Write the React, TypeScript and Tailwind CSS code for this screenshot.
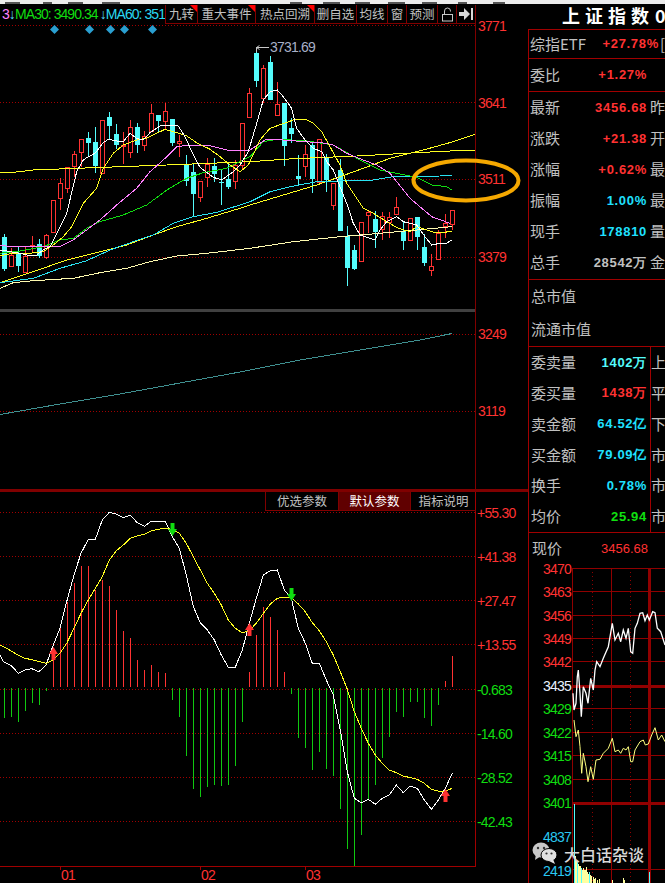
type P = number[];

const pts = (list: P[]) => list.map(([x, y]) => `${x.toFixed(1)},${y.toFixed(1)}`).join(" ");

// price chart lines are read off two crops, 3x scale, second one shifted by 250px
const price = (a: P[], b: P[]) => [
  ...a.map(([x, y]) => [x / 3, (y + 270) / 3]),
  ...b.map(([x, y]) => [(x + 750) / 3, (y + 270) / 3]),
];
const macd = (a: P[], b: P[]) => [
  ...a.map(([x, y]) => [x / 3, y / 3 + 480]),
  ...b.map(([x, y]) => [(x + 780) / 3, y / 3 + 480]),
];
const mini = (a: P[]) => a.map(([x, y]) => [x / 3 + 500, y / 3 + 560]);

const axisText = "font-['Liberation_Sans',sans-serif] text-[14px] tracking-[-0.8px]";

const candles: [number, number, number, number, "r" | "c"][] = [
  [702, 711, 807, 813, "c"], [745, 765, 797, 800, "r"], [740, 762, 797, 815, "c"], [740, 767, 815, 820, "r"],
  [708, 736, 738, 760, "r"], [718, 732, 767, 773, "c"], [703, 706, 772, 776, "r"], [599, 601, 695, 695, "r"],
  [535, 550, 595, 630, "r"], [502, 502, 565, 578, "r"], [453, 463, 497, 530, "r"], [418, 418, 457, 500, "r"],
  [396, 414, 429, 470, "c"], [380, 426, 497, 520, "c"], [361, 361, 520, 520, "r"], [337, 351, 378, 420, "c"],
  [373, 402, 434, 447, "c"], [396, 434, 436, 492, "r"], [360, 382, 455, 475, "r"], [368, 381, 435, 460, "c"],
  [392, 407, 436, 453, "r"], [312, 340, 392, 395, "r"], [345, 345, 363, 400, "c"], [310, 334, 364, 390, "r"],
  [357, 357, 429, 438, "c"], [405, 424, 430, 470, "r"], [465, 492, 542, 558, "c"], [492, 516, 581, 648, "c"],
  [544, 544, 592, 605, "r"], [475, 493, 532, 560, "r"], [475, 498, 522, 545, "c"], [510, 546, 548, 615, "c"],
  [488, 536, 560, 566, "c"], [480, 496, 544, 566, "r"], [370, 370, 495, 510, "r"], [265, 280, 352, 352, "r"],
  [140, 160, 242, 260, "c"], [195, 204, 295, 310, "r"], [168, 187, 300, 300, "c"], [245, 313, 344, 344, "r"],
  [308, 308, 437, 498, "c"], [355, 384, 402, 430, "c"], [465, 528, 537, 555, "c"], [435, 463, 498, 530, "r"],
  [430, 436, 537, 578, "c"], [416, 418, 545, 545, "r"], [462, 473, 540, 575, "c"], [549, 549, 616, 630, "r"],
  [478, 510, 693, 693, "c"], [678, 707, 803, 857, "c"], [735, 750, 807, 810, "c"], [667, 667, 782, 782, "r"],
  [632, 636, 646, 700, "r"], [632, 657, 697, 743, "c"], [635, 648, 687, 720, "r"], [635, 652, 665, 713, "r"],
  [592, 620, 641, 641, "r"], [665, 692, 722, 750, "c"], [655, 655, 720, 723, "r"], [651, 651, 710, 750, "c"],
  [702, 741, 788, 797, "c"], [762, 797, 809, 827, "r"], [690, 700, 776, 776, "r"], [642, 669, 677, 713, "r"],
  [631, 631, 671, 690, "r"],
];

const priceLines: { color: string; points: number[][] }[] = [
  {
    color: "#fffbb0",
    points: price(
      [[0, 595], [40, 578], [100, 572], [220, 565], [300, 548], [380, 535], [450, 515], [530, 498], [620, 490], [750, 475]],
      [[130, 455], [270, 440], [390, 430], [500, 420], [605, 410]]
    ),
  },
  {
    color: "#ffff20",
    points: price(
      [[0, 247], [40, 247], [100, 240], [230, 235], [360, 230], [500, 225], [750, 215]],
      [[100, 208], [200, 203], [320, 198], [500, 188], [600, 183], [675, 181]]
    ),
  },
  {
    color: "#ffff20",
    points: price(
      [[0, 578], [100, 545], [200, 510], [300, 485], [380, 465], [460, 435], [530, 410], [620, 385], [720, 355], [750, 345]],
      [[100, 315], [200, 285], [270, 260], [340, 235], [420, 205], [520, 180], [610, 155], [675, 133]]
    ),
  },
  {
    color: "#29e2f2",
    points: price(
      [[0, 578], [100, 565], [180, 535], [260, 512], [330, 480], [400, 455], [460, 435], [520, 400], [580, 380], [650, 367], [720, 345], [750, 335]],
      [[60, 305], [120, 290], [200, 275], [290, 272], [370, 270], [430, 260], [500, 260], [570, 258], [605, 256]]
    ),
  },
  {
    color: "#10dc10",
    points: price(
      [[0, 490], [60, 483], [130, 470], [180, 450], [220, 445], [260, 415], [300, 395], [370, 375], [440, 345], [500, 300], [560, 265], [610, 248], [680, 235], [750, 200]],
      [[40, 155], [80, 148], [165, 152], [250, 165], [330, 210], [390, 240], [450, 252], [500, 262], [545, 285], [590, 290], [605, 300]]
    ),
  },
  {
    color: "#ff80ff",
    points: price(
      [[0, 467], [60, 470], [130, 470], [180, 470], [220, 450], [260, 420], [300, 390], [350, 345], [410, 295], [450, 245], [490, 210], [530, 170], [570, 165], [630, 167], [680, 180], [750, 180]],
      [[50, 147], [100, 150], [165, 155], [215, 158], [250, 165], [290, 190], [340, 210], [380, 225], [420, 250], [480, 325], [545, 380], [600, 400]]
    ),
  },
  {
    color: "#ffff20",
    points: price(
      [[0, 497], [40, 490], [90, 490], [130, 485], [160, 465], [190, 440], [215, 410], [250, 340], [290, 295], [310, 235], [340, 190], [370, 165], [410, 150], [440, 145], [470, 130], [495, 118], [530, 128], [560, 138], [590, 158], [630, 178], [660, 200], [690, 225], [720, 245], [745, 225]],
      [[30, 150], [60, 115], [130, 90], [165, 87], [190, 100], [215, 125], [240, 170], [270, 225], [290, 280], [320, 325], [340, 355], [370, 370], [410, 395], [445, 415], [480, 425], [500, 410], [530, 420], [555, 428], [605, 425]]
    ),
  },
  {
    color: "#ffffff",
    points: price(
      [[0, 480], [20, 483], [40, 487], [60, 490], [90, 497], [110, 495], [130, 480], [150, 470], [180, 410], [200, 370], [230, 245], [250, 210], [265, 200], [285, 190], [310, 158], [325, 148], [350, 153], [370, 155], [390, 130], [410, 145], [430, 150], [450, 128], [480, 108], [500, 105], [535, 108], [555, 140], [580, 195], [600, 232], [640, 262], [665, 270], [700, 245], [720, 225], [745, 185]],
      [[20, 100], [40, 30], [60, 5], [82, 0], [100, 20], [125, 55], [140, 115], [165, 150], [190, 175], [215, 185], [230, 215], [250, 240], [270, 290], [290, 340], [310, 400], [330, 435], [375, 450], [390, 420], [410, 395], [440, 380], [460, 395], [500, 405], [525, 440], [545, 465], [570, 460], [590, 460], [605, 450]]
    ),
  },
];

const macdBars = [
  714, 711, 726, 693, 669, 675, 633, 525, 445, 365, 310, 258, 258, 330, 300, 318, 390, 453, 474, 540, 570, 555, 576, 579,
  660, 711, 828, 927, 951, 921, 915, 918, 915, 858, 726, 576, 465, 381, 411, 450, 576,
  642, 774, 804, 870, 816, 867, 888, 987, 1107, 1158, 1065, 960, 915, 834, 771, 696, 711, 666, 666, 714, 738, 675, 603, 528,
];

const difLine = macd(
  [[0, 525], [10, 545], [35, 558], [55, 580], [75, 570], [95, 566], [117, 575], [138, 555], [160, 495], [180, 445], [200, 365], [222, 285], [243, 220], [265, 178], [286, 178], [307, 120], [328, 97], [349, 102], [370, 113], [391, 106], [412, 128], [433, 139], [454, 124], [475, 126], [496, 124], [517, 170], [538, 205], [559, 285], [580, 380], [601, 428], [622, 450], [643, 480], [664, 525], [685, 562], [706, 562], [727, 510], [748, 430], [769, 355], [780, 318]],
  [[10, 285], [31, 272], [52, 270], [73, 330], [94, 355], [115, 445], [136, 490], [157, 550], [178, 550], [199, 600], [220, 645], [241, 750], [262, 875], [283, 955], [304, 968], [325, 958], [346, 973], [367, 955], [388, 945], [409, 915], [430, 938], [451, 918], [472, 925], [493, 960], [514, 988], [535, 960], [556, 925], [577, 880]]
);
const deaLine = macd(
  [[0, 495], [20, 505], [50, 523], [75, 535], [100, 540], [138, 550], [160, 540], [180, 520], [200, 490], [222, 445], [243, 400], [265, 360], [286, 325], [307, 290], [328, 240], [349, 212], [370, 195], [391, 175], [412, 168], [433, 163], [454, 153], [475, 148], [496, 145], [517, 148], [538, 160], [559, 190], [580, 230], [601, 270], [622, 310], [643, 340], [664, 375], [685, 420], [706, 445], [727, 458], [748, 452], [769, 430], [780, 415]],
  [[10, 400], [31, 372], [52, 355], [73, 352], [94, 352], [115, 372], [136, 395], [157, 428], [178, 452], [199, 485], [220, 525], [241, 575], [262, 628], [283, 695], [304, 745], [325, 790], [346, 825], [367, 850], [388, 870], [409, 878], [430, 888], [451, 893], [472, 898], [493, 910], [514, 928], [535, 933], [556, 933], [577, 925]]
);

const macdAxis = [
  { y: 512.5, label: "+55.30", up: true },
  { y: 556.5, label: "+41.38", up: true },
  { y: 600.5, label: "+27.47", up: true },
  { y: 644.5, label: "+13.55", up: true },
  { y: 689.5, label: "-0.683", up: false },
  { y: 733.5, label: "-14.60", up: false },
  { y: 777.5, label: "-28.52", up: false },
  { y: 821.5, label: "-42.43", up: false },
];

const miniWhite = mini([[219, 400], [222, 450], [228, 430], [232, 350], [235, 330], [240, 400], [244, 470], [250, 380], [258, 400], [264, 430], [272, 355], [280, 390], [285, 330], [290, 305], [300, 320], [310, 295], [325, 260], [337, 190], [345, 240], [355, 220], [362, 245], [370, 210], [378, 235], [385, 205], [392, 275], [398, 280], [405, 205], [412, 190], [420, 160], [428, 158], [435, 182], [442, 165], [448, 180], [458, 155], [465, 158], [472, 205], [482, 215], [495, 255]]);
const miniYellow = mini([[222, 480], [228, 530], [235, 510], [240, 560], [245, 640], [250, 580], [258, 620], [264, 665], [272, 620], [280, 658], [288, 600], [300, 598], [310, 580], [325, 565], [337, 535], [345, 575], [355, 570], [362, 580], [370, 565], [378, 570], [385, 560], [392, 605], [398, 605], [405, 570], [420, 545], [430, 540], [436, 555], [445, 552], [455, 525], [465, 503], [475, 540], [485, 525], [495, 545]]);

const miniAxis = [
  { y: 569, label: "3470", cls: "fill-[#ff3232]" },
  { y: 592, label: "3463", cls: "fill-[#ff3232]" },
  { y: 616, label: "3456", cls: "fill-[#ff3232]" },
  { y: 639, label: "3449", cls: "fill-[#ff3232]" },
  { y: 662, label: "3442", cls: "fill-[#ff3232]" },
  { y: 686, label: "3435", cls: "fill-[#e8f0ff]" },
  { y: 709, label: "3429", cls: "fill-[#10dc10]" },
  { y: 733, label: "3422", cls: "fill-[#10dc10]" },
  { y: 756, label: "3415", cls: "fill-[#10dc10]" },
  { y: 780, label: "3408", cls: "fill-[#10dc10]" },
  { y: 803, label: "3401", cls: "fill-[#10dc10]" },
  { y: 837, label: "4837", cls: "fill-[#29c8f2]" },
  { y: 871, label: "2419", cls: "fill-[#29c8f2]" },
];

// volume bars at the foot of the intraday chart
const miniVolume = [
  { x: 574, top: 804, color: "#54fcfc" }, { x: 575, top: 856, color: "#ffffa0" }, { x: 576, top: 860, color: "#ffffa0" },
  { x: 577, top: 862, color: "#54fcfc" }, { x: 578, top: 864, color: "#ffffa0" }, { x: 579, top: 866, color: "#ffffa0" },
  { x: 580, top: 866, color: "#ffffa0" }, { x: 581, top: 868, color: "#54fcfc" }, { x: 582, top: 870, color: "#ffffa0" },
  { x: 583, top: 868, color: "#ffffa0" }, { x: 584, top: 870, color: "#ffffa0" }, { x: 585, top: 870, color: "#ffffa0" },
  { x: 586, top: 867, color: "#ffffa0" }, { x: 587, top: 872, color: "#ffffa0" }, { x: 588, top: 874, color: "#ffffa0" },
  { x: 589, top: 872, color: "#54fcfc" }, { x: 590, top: 875, color: "#ffffa0" }, { x: 591, top: 876, color: "#ffffa0" },
  { x: 593, top: 877, color: "#ffffa0" }, { x: 594, top: 879, color: "#ffffa0" }, { x: 595, top: 878, color: "#ffffa0" },
  { x: 597, top: 880, color: "#ffffa0" }, { x: 599, top: 879, color: "#ffffa0" }, { x: 612, top: 880, color: "#ffffa0" },
  { x: 623, top: 878, color: "#ffffa0" }, { x: 624, top: 880, color: "#ffffa0" }, { x: 649, top: 872, color: "#54fcfc" },
];

const stripMarks = [
  [5, 13], [15, 5], [43, 9], [68, 15], [102, 18], [290, 12], [323, 17], [355, 15], [388, 17], [422, 15], [458, 9], [493, 12],
];

const Arrow = ({ x, y, up }: { x: number; y: number; up: boolean }) => (
  <polygon
    points={
      up
        ? `${x},${y} ${x + 4.5},${y + 7} ${x + 2},${y + 7} ${x + 2},${y + 13} ${x - 2},${y + 13} ${x - 2},${y + 7} ${x - 4.5},${y + 7}`
        : `${x},${y + 13} ${x + 4.5},${y + 6} ${x + 2},${y + 6} ${x + 2},${y} ${x - 2},${y} ${x - 2},${y + 6} ${x - 4.5},${y + 6}`
    }
    fill={up ? "#ff3232" : "#10dc10"}
  />
);

const Dotted = ({ y, x2 = 475 }: { y: number; x2?: number }) => (
  <line x1={0} x2={x2} y1={y} y2={y} stroke="#a00000" strokeDasharray="1 2" shapeRendering="crispEdges" />
);

function PriceChart() {
  return (
    <svg viewBox="0 5 528 304" className="block h-[304px] w-[528px]">
      <Dotted y={25.5} />
      <Dotted y={102.5} />
      <Dotted y={179.5} />
      <Dotted y={257.5} />
      <line x1={475.5} x2={475.5} y1={5} y2={309} stroke="#800000" />
      {[54.5, 89.5, 110.5, 124.5, 152.5].map((x) => (
        <polygon key={x} points={`${x},25 ${x + 4.5},29.5 ${x},34 ${x - 4.5},29.5`} fill="#2a9fd0" />
      ))}
      {candles.map(([wTop, bTop, bBot, wBot, kind], i) => {
        const left = 2 + 7 * i;
        const color = kind === "r" ? "#ff3232" : "#54fcfc";
        const top = Math.round(bTop / 3);
        const bottom = Math.round(bBot / 3);
        return (
          <g key={i} shapeRendering="crispEdges">
            <line x1={left + 2.5} x2={left + 2.5} y1={wTop / 3} y2={wBot / 3} stroke={color} />
            {kind === "r" ? (
              <rect x={left + 0.5} y={top + 0.5} width={4} height={Math.max(bottom - top, 1)} fill="#000" stroke={color} />
            ) : (
              <rect x={left} y={top} width={5} height={Math.max(bottom - top, 1)} fill={color} />
            )}
          </g>
        );
      })}
      {priceLines.map((l, i) => (
        <polyline key={i} points={pts(l.points)} fill="none" stroke={l.color} strokeWidth={1} shapeRendering="crispEdges" />
      ))}
      <path d="M256.5 52V47.5H269M256.5 47.5l3 -2M256.5 47.5l3 2" fill="none" stroke="#c8c8c8" />
      <text x={270} y={52} className={`fill-[#a8b0c8] ${axisText}`}>
        3731.69
      </text>
      {[
        [26, "3771"],
        [103, "3641"],
        [179, "3511"],
        [257, "3379"],
      ].map(([y, label]) => (
        <text key={label} x={478} y={Number(y) + 5} className={`fill-[#ff3232] ${axisText}`}>
          {label}
        </text>
      ))}
      <ellipse cx={466} cy={180.5} rx={52.5} ry={20} fill="none" stroke="#f5a800" strokeWidth={4} />
    </svg>
  );
}

function MiddleChart() {
  return (
    <svg viewBox="0 309 528 180" className="block h-[180px] w-[528px]">
      <rect x={0} y={309} width={475} height={3} fill="#404040" />
      <line x1={475.5} x2={475.5} y1={309} y2={489} stroke="#800000" />
      <Dotted y={334.5} />
      <Dotted y={411.5} />
      <polyline
        points="0,414.5 60,404 120,394 180,383 240,372 300,360 360,350 420,340 452,333.5"
        fill="none"
        stroke="#3f9090"
        shapeRendering="crispEdges"
      />
      {[
        [334, "3249"],
        [411, "3119"],
      ].map(([y, label]) => (
        <text key={label} x={478} y={Number(y) + 5} className={`fill-[#ff3232] ${axisText}`}>
          {label}
        </text>
      ))}
    </svg>
  );
}

function MacdChart() {
  return (
    <svg viewBox="0 492 528 391" className="block h-[391px] w-[528px]">
      {macdAxis.map((a) => (
        <Dotted key={a.label} y={a.y} />
      ))}
      <line x1={475.5} x2={475.5} y1={492} y2={867} stroke="#a00000" />
      <line x1={0} x2={476} y1={866.5} y2={866.5} stroke="#a00000" />
      {macdBars.map((v, i) => {
        const x = Math.floor(4.33 + 7 * i) + 0.5;
        const up = v < 621;
        return (
          <line
            key={i}
            x1={x}
            x2={x}
            y1={(up ? 621 : 625) / 3 + 480}
            y2={v / 3 + 480}
            stroke={up ? "#ff3232" : "#10c810"}
            shapeRendering="crispEdges"
          />
        );
      })}
      <polyline points={pts(difLine)} fill="none" stroke="#ffffff" shapeRendering="crispEdges" />
      <polyline points={pts(deaLine)} fill="none" stroke="#ffff20" shapeRendering="crispEdges" />
      <Arrow x={53.5} y={647} up />
      <Arrow x={249.5} y={623} up />
      <Arrow x={445.5} y={789} up />
      <Arrow x={172.5} y={523} up={false} />
      <Arrow x={291.5} y={588} up={false} />
      {macdAxis.map((a) => (
        <text key={a.label} x={477} y={a.y + 5} className={`${a.up ? "fill-[#ff3232]" : "fill-[#10dc10]"} ${axisText}`}>
          {a.label}
        </text>
      ))}
      {[
        [60.5, 61, "01"],
        [200.5, 201, "02"],
        [305.5, 306, "03"],
      ].map(([tick, x, label]) => (
        <g key={label}>
          <line x1={tick} x2={tick} y1={867} y2={870} stroke="#a00000" />
          <text x={x} y={880} className={`fill-[#ff3232] ${axisText}`}>
            {label}
          </text>
        </g>
      ))}
    </svg>
  );
}

function MiniChart() {
  return (
    <svg viewBox="529 562 136 321" className="block h-[321px] w-[136px]">
      <g stroke="#900000" shapeRendering="crispEdges">
        {[569, 592, 616, 639, 662, 709, 733, 756, 780, 870].map((y) => (
          <line key={y} x1={572} x2={665} y1={y - 0.5} y2={y - 0.5} />
        ))}
        <rect x={572} y={685} width={93} height={2} fill="#900000" />
        <rect x={572} y={802} width={93} height={2} fill="#900000" />
        <line x1={572.5} x2={572.5} y1={568} y2={883} />
        <line x1={611.5} x2={611.5} y1={568} y2={883} />
        <rect x={648} y={568} width={2} height={315} fill="#900000" />
        <line x1={592.5} x2={592.5} y1={568} y2={883} strokeDasharray="1 3" />
        <line x1={630.5} x2={630.5} y1={568} y2={883} strokeDasharray="1 3" />
      </g>
      {miniVolume.map((b) => (
        <line key={b.x} x1={b.x + 0.5} x2={b.x + 0.5} y1={b.top} y2={883} stroke={b.color} shapeRendering="crispEdges" />
      ))}
      <polyline points={pts(miniYellow)} fill="none" stroke="#ffff80" />
      <polyline points={pts(miniWhite)} fill="none" stroke="#ffffff" strokeWidth={1.3} />
      {miniAxis.map((a) => (
        <text key={a.label} x={571} y={a.y + 5} textAnchor="end" className={`${a.cls} ${axisText}`}>
          {a.label}
        </text>
      ))}
    </svg>
  );
}

const toolButtons = [
  { label: "九转", w: "w-[32px]", flag: true },
  { label: "重大事件", w: "w-[58px]", flag: true },
  { label: "热点回溯", w: "w-[59px]", flag: true },
  { label: "删自选", w: "w-[42px]", flag: false },
  { label: "均线", w: "w-[31px]", flag: false },
  { label: "窗", w: "w-[19px]", flag: false },
  { label: "预测", w: "w-[31px]", flag: false },
];

function Toolbar() {
  return (
    <div className="absolute left-[165px] top-0 flex h-[19px] w-[311px] border-b border-[#800000] text-[12.5px] leading-[18px] text-[#c0c0c0]">
      {toolButtons.map((b) => (
        <div key={b.label} className={`relative flex shrink-0 justify-center border-l border-[#800000] ${b.w}`}>
          {b.label}
          {b.flag && (
            <span className="absolute right-0 top-0 h-0 w-0 border-l-[7px] border-t-[7px] border-l-transparent border-t-[#ff0000]" />
          )}
        </div>
      ))}
      <div className="flex w-[19px] shrink-0 items-center justify-center border-l border-[#800000]">
        <svg width="13" height="15" viewBox="0 0 13 15" fill="none" stroke="#c8c8c8">
          <rect x="1.5" y="7.5" width="10" height="6.5" />
          <path d="M3.5 7V4a3 3 0 0 1 6 0v.5" />
        </svg>
      </div>
      <div className="flex w-[19px] shrink-0 items-center justify-center border-l border-[#800000]">
        <svg width="14" height="12" viewBox="0 0 14 12" fill="#d8d8d8">
          <polygon points="0,4 5,4 5,0 11,6 5,12 5,8 0,8" />
          <rect x="12" y="0" width="2" height="12" />
        </svg>
      </div>
      <div className="w-px shrink-0 bg-[#800000]" />
    </div>
  );
}

function Legend() {
  return (
    <div className="absolute left-0 top-0 flex h-[19px] w-[165px] items-center overflow-hidden whitespace-nowrap pl-[2px] font-['Liberation_Sans',sans-serif] text-[14px] tracking-[-0.95px]">
      <span className="text-[#ff80ff]">3</span>
      <span className="w-[9px] text-[#54d8fc]">↓</span>
      <span className="text-[#10dc10]">MA30: 3490.34</span>
      <span className="ml-[2px] w-[9px] text-[#54d8fc]">↓</span>
      <span className="text-[#29d8f2]">MA60: 351</span>
    </div>
  );
}

type RowProps = {
  label: string;
  value?: string;
  side?: string;
  tone?: string;
};

const numFont = "font-['Liberation_Sans',sans-serif] text-[13px] font-bold tracking-[0.7px]";

function Row({ label, value, side, tone = "text-[#ff3232]" }: RowProps) {
  return (
    <div className="flex h-[31px] items-center pl-[1px]">
      <span className="shrink-0">{label}</span>
      <span className={`ml-auto mr-[3px] whitespace-nowrap ${numFont} ${tone}`}>{value}</span>
      <span className="w-[15px] shrink-0 overflow-hidden whitespace-nowrap">{side}</span>
    </div>
  );
}

const quoteRows: RowProps[] = [
  { label: "最新", value: "3456.68", side: "昨" },
  { label: "涨跌", value: "+21.38", side: "开" },
  { label: "涨幅", value: "+0.62%", side: "最" },
  { label: "振幅", value: "1.00%", side: "最", tone: "text-[#1fe0ff]" },
  { label: "现手", value: "178810", side: "量", tone: "text-[#1fe0ff]" },
  { label: "总手", value: "28542万", side: "金", tone: "text-[#c0c0c0]" },
];

const bookRows: RowProps[] = [
  { label: "委卖量", value: "1402万", side: "上", tone: "text-[#54fcfc]" },
  { label: "委买量", value: "1438万", side: "平", tone: "text-[#ff3232]" },
  { label: "卖金额", value: "64.52亿", side: "下", tone: "text-[#1fe0ff]" },
  { label: "买金额", value: "79.09亿", side: "市", tone: "text-[#1fe0ff]" },
  { label: "换手", value: "0.78%", side: "市", tone: "text-[#1fe0ff]" },
  { label: "均价", value: "25.94", side: "市", tone: "text-[#10e010]" },
];

function QuotePanel() {
  return (
    <aside className="flex h-[878px] w-[137px] shrink-0 flex-col overflow-hidden font-['Noto_Sans_CJK_SC',sans-serif] text-[15px] text-[#c0c0c0]">
      <div className="flex h-[24px] shrink-0 items-center overflow-hidden whitespace-nowrap pb-[3px] pl-[34px] text-[18px] font-bold text-white">
        <span className="tracking-[5px]">上证指数</span>
        <span className="ml-[1px]">0</span>
      </div>
      <div className="flex flex-1 flex-col border-l border-[#a00000]">
        <div className="flex h-[29px] shrink-0 items-center border-t border-[#a00000] pl-[1px]">
          <span>综指ETF</span>
          <span className={`ml-auto mr-[1px] ${numFont} text-[#ff3232]`}>+27.78%</span>
          <span className="w-[5px] overflow-hidden">[</span>
        </div>
        <div className="flex h-[33px] shrink-0 items-center border-t border-[#a00000] pl-[1px]">
          <span>委比</span>
          <span className={`ml-auto mr-[18px] ${numFont} text-[#ff3232]`}>+1.27%</span>
        </div>
        <div className="h-[188px] shrink-0 border-t border-[#a00000]">
          {quoteRows.map((r) => (
            <Row key={r.label} {...r} />
          ))}
        </div>
        <div className="h-[67px] shrink-0 border-t border-[#a00000] pl-[2px]">
          <div className="flex h-[33px] items-center">总市值</div>
          <div className="flex h-[33px] items-center">流通市值</div>
        </div>
        <div className="flex h-[186px] shrink-0 border-t border-[#a00000]">
          <div className="flex-1 pl-[2px]">
            {bookRows.map((r) => (
              <div key={r.label} className="flex h-[30.8px] items-center">
                <span>{r.label}</span>
                <span className={`ml-auto mr-[3px] whitespace-nowrap ${numFont} ${r.tone}`}>{r.value}</span>
              </div>
            ))}
          </div>
          <div className="w-[15px] shrink-0 border-l border-[#a00000]">
            {bookRows.map((r, i) => (
              <div key={i} className="flex h-[30.8px] items-center overflow-hidden whitespace-nowrap">
                {r.side}
              </div>
            ))}
          </div>
        </div>
        <div className="flex h-[30px] shrink-0 items-center border-t border-[#a00000] pl-[3px] pt-[2px]">
          <span>现价</span>
          <span className="ml-auto mr-[17px] font-['Liberation_Sans',sans-serif] text-[13px] text-[#ff3232]">3456.68</span>
        </div>
        <MiniChart />
      </div>
    </aside>
  );
}

function Watermark() {
  return (
    <div className="absolute left-[532px] top-[842px] flex items-start gap-[6px]">
      <svg width="26" height="22" viewBox="0 0 26 22">
        <ellipse cx="9" cy="8" rx="8.5" ry="7.5" fill="#c8c8c8" />
        <polygon points="4,12 3,18 9,14" fill="#c8c8c8" />
        <circle cx="6" cy="6" r="1.2" fill="#333" />
        <circle cx="12" cy="6" r="1.2" fill="#333" />
        <ellipse cx="17" cy="13" rx="8" ry="6.5" fill="#e0e0e0" stroke="#000" />
        <polygon points="21,17 23,22 17,19" fill="#e0e0e0" />
        <circle cx="14.5" cy="11.5" r="1.1" fill="#333" />
        <circle cx="19.5" cy="11.5" r="1.1" fill="#333" />
      </svg>
      <span className="mt-[4px] font-['Noto_Sans_CJK_SC',sans-serif] text-[16px] font-medium leading-[16px] text-[#d8d8d8]">
        大白话杂谈
      </span>
    </div>
  );
}

export default function App() {
  return (
    <div className="relative h-[883px] w-[665px] overflow-hidden bg-black">
      <div className="relative h-[5px] bg-[#ececec]">
        {stripMarks.map(([x, w]) => (
          <span key={x} className="absolute bottom-[1px] h-[2px] bg-[#555]" style={{ left: x, width: w }} />
        ))}
        <span className="absolute bottom-0 left-0 h-px w-full bg-black" />
      </div>
      <div className="flex">
        <div className="w-[528px] shrink-0 font-['Noto_Sans_CJK_SC',sans-serif]">
          <div className="relative">
            <PriceChart />
            <Legend />
            <Toolbar />
          </div>
          <MiddleChart />
          <div className="h-[3px] bg-[#800000]" />
          <div className="relative">
            <MacdChart />
            <div className="absolute left-[265px] top-0 flex h-[19px] w-[211px] border-b border-l border-[#800000] text-[12.5px] leading-[18px] text-[#c0c0c0]">
              <span className="flex w-[72px] justify-center">优选参数</span>
              <span className="flex w-[73px] justify-center border-x border-[#800000] bg-[#600000] text-white">默认参数</span>
              <span className="flex flex-1 justify-center">指标说明</span>
            </div>
          </div>
        </div>
        <QuotePanel />
      </div>
      <Watermark />
    </div>
  );
}
